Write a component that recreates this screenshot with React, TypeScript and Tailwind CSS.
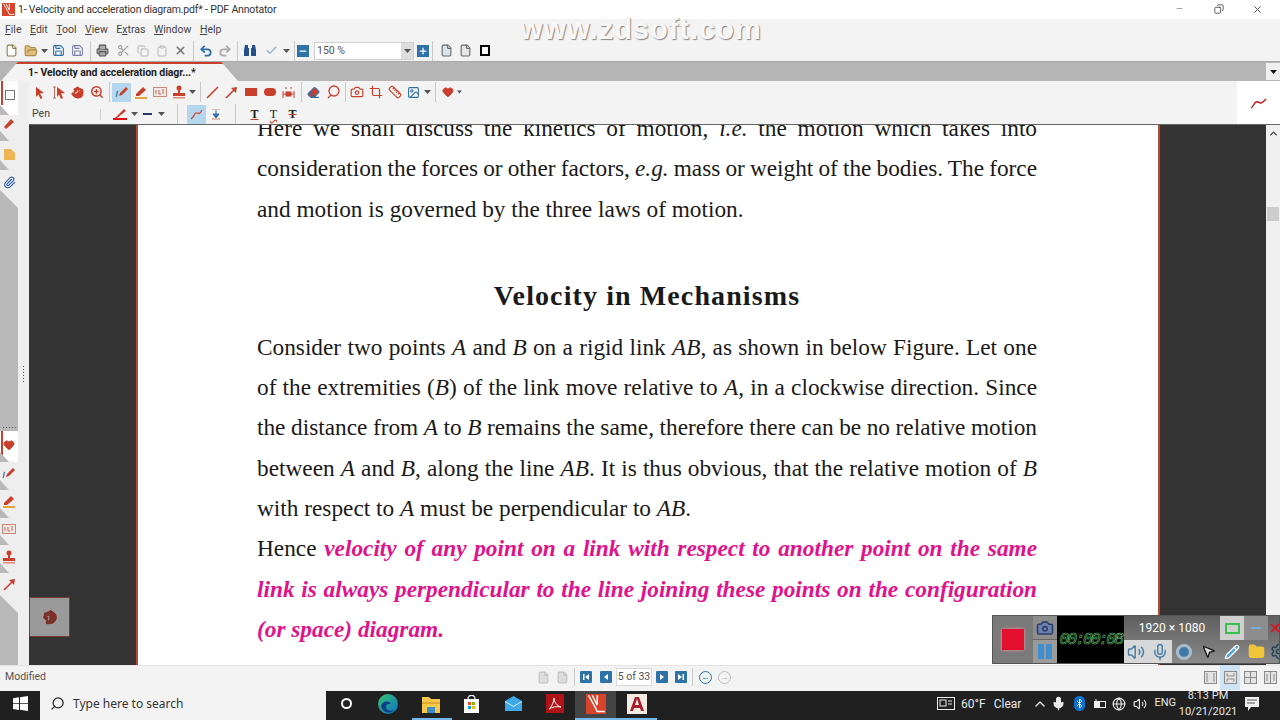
import { ReactNode } from 'react';
import {
  Search, Mic, Volume2, ChevronUp, Bluetooth, Globe, Settings, Folder, MousePointer2, Pencil, Minus,
  X, Copy, Save, Printer, Scissors, Clipboard, Undo2, Redo2, ZoomIn, Hand, Camera, Crop, Ruler, Paperclip,
  Heart, Eraser, File, FolderOpen, Image, Plus, Check,
} from 'lucide-react';

const RED = '#c8402c';
const BLUE = '#2b6ea8';

function Caret({ dark }: { dark?: boolean }) {
  return (
    <svg width="7" height="4" viewBox="0 0 7 4">
      <path d="M0 0h7L3.5 4z" fill={dark ? '#111' : '#555'} />
    </svg>
  );
}

function Sep() {
  return <div className="mx-[2.5px] h-[20px] w-px shrink-0 bg-[#c9c9c9]" />;
}

function Cell({ children, active }: { children: ReactNode; active?: boolean }) {
  return (
    <div className={`flex h-[19px] w-[19px] shrink-0 items-center justify-center ${active ? 'bg-[#b5d7ee]' : ''}`}>
      {children}
    </div>
  );
}

function Arrow() {
  return (
    <svg width="12" height="13" viewBox="0 0 12 13">
      <path d="M2 1l8 6-4 .5 2.5 4.5-2 1-2-4.5L2 11z" fill={RED} />
    </svg>
  );
}

function ArrowBeam() {
  return (
    <svg width="14" height="13" viewBox="0 0 14 13" fill="none">
      <path d="M1 1h3M1 12h3M2.500 1v11" stroke="#b5705f" />
      <path d="M5 1l8 6-4 .5 2 4.500-2 1-2-4.500-2 2.500z" fill={RED} />
    </svg>
  );
}

function PenLine() {
  return (
    <svg width="14" height="14" viewBox="0 0 14 14" fill="none">
      <path d="M1 12c2-3 0-5 2-6" stroke="#2b6ea8" strokeWidth="1.2" />
      <path d="M4 11l1-3 6-6 2 2-6 6z" fill={RED} />
    </svg>
  );
}

function Marker() {
  return (
    <svg width="14" height="14" viewBox="0 0 14 14">
      <path d="M2 9l7-7 3 3-7 6H2z" fill={RED} />
      <rect x="1" y="12" width="12" height="2" fill="#e8a33a" />
    </svg>
  );
}

function TextBox() {
  return (
    <svg width="14" height="12" viewBox="0 0 14 12" fill="none">
      <rect x=".5" y="1.5" width="13" height="9" fill="#f3e6e2" stroke="#c8897a" />
      <path d="M3 4v4M6 4v4h2M10 3v5" stroke="#b5705f" />
    </svg>
  );
}

function Stamp() {
  return (
    <svg width="14" height="14" viewBox="0 0 14 14">
      <circle cx="7" cy="3" r="2.5" fill={RED} />
      <rect x="6" y="4" width="2" height="4" fill={RED} />
      <rect x="1" y="8" width="12" height="3" fill={RED} />
      <rect x="1" y="12" width="12" height="1.5" fill="#e58a78" />
    </svg>
  );
}

function RedArrow() {
  return (
    <svg width="13" height="13" viewBox="0 0 13 13" fill="none">
      <path d="M1 12L9 4" stroke={RED} strokeWidth="1.6" />
      <path d="M6 2l6-1-1 6z" fill={RED} />
    </svg>
  );
}

function Binoculars() {
  return (
    <svg width="14" height="13" viewBox="0 0 14 13">
      <path d="M2 1h3v3h1v8H1V6zM9 1h3l1 5v6H8V4h1z" fill="#274f8a" />
    </svg>
  );
}

function AnnotatorLogo({ size }: { size: number }) {
  return (
    <svg width={size} height={size} viewBox="0 0 16 16" fill="none">
      <rect width="16" height="16" fill="#d8432c" />
      <path d="M2 1l5 9 2 4h6M5 1l4 8M9 1v7" stroke="#fff" strokeWidth="1.2" />
    </svg>
  );
}

function NavBtn({ d }: { d: string }) {
  return (
    <div className="flex h-[12px] w-[12px] items-center justify-center rounded-[1px] bg-[#2f72a8]">
      <svg width="8" height="8" viewBox="0 0 8 8">
        <path d={d} fill="#fff" />
      </svg>
    </div>
  );
}

function ViewBtn({ d, active }: { d: string; active?: boolean }) {
  return (
    <div className={`flex h-[25px] w-[20px] items-center justify-center ${active ? 'bg-[#cde4f5]' : ''}`}>
      <svg width="13" height="13" viewBox="0 0 13 13" fill="#e4e4e4" stroke="#8a8a8a">
        <rect x=".5" y=".5" width="12" height="12" />
        <path d={d} fill="none" />
      </svg>
    </div>
  );
}

function SideTab({ children, className, white, last }: { children: ReactNode; className: string; white?: boolean; last?: boolean }) {
  return (
    <div className={`relative flex w-[18px] items-center justify-center ${className} ${white ? 'bg-white' : 'bg-[#eeeeee]'}`}>
      {white && <div className="absolute top-0 left-[1px] h-[24px] w-[1.5px] bg-[#c8402c]" />}
      <div className="relative z-10">{children}</div>
      {!last && (
        <div className="absolute bottom-0 left-0 h-[10px] w-[9px] bg-[#b9b9b9] [clip-path:polygon(0_0,100%_100%,0_100%)]" />
      )}
    </div>
  );
}

function SideEnd() {
  return <div className="h-[18px] w-[18px] shrink-0 bg-[#eeeeee] [clip-path:polygon(0_0,100%_100%,100%_0)]" />;
}

function Sidebar() {
  return (
    <div className="flex w-[29px] shrink-0 bg-[#eeeeee]">
      <div className="flex w-[18px] flex-col bg-[#b9b9b9]">
        <SideTab white className="h-[34px] pb-[6px] pl-[1px]">
          <div className="h-[10px] w-[10px] border border-[#777] bg-white" />
        </SideTab>
        <SideTab className="h-[26px] pb-[8px]">
          <svg width="13" height="13" viewBox="0 0 13 13">
            <path d="M1 9l7-8 3 3-8 7z" fill={RED} />
          </svg>
        </SideTab>
        <SideTab className="h-[29px] pb-[3px]">
          <svg width="11" height="11" viewBox="0 0 11 11">
            <path d="M0 0h7l4 4v7H0z" fill="#efb454" />
          </svg>
        </SideTab>
        <SideTab last className="h-[20px] pt-[5px]">
          <Paperclip size={13} color="#2f5fa8" />
        </SideTab>
        <SideEnd />
        <div className="flex h-[223px] items-end justify-center gap-[2px] pb-[3px]">
          {[0, 1, 2, 3, 4].map((i) => (
            <div key={i} className="h-px w-px bg-[#555]" />
          ))}
        </div>
        <SideTab white className="h-[31px] pb-[3px]">
          <Heart size={12} fill={RED} color={RED} />
        </SideTab>
        <SideTab className="h-[28px] pb-[6px]">
          <PenLine />
        </SideTab>
        <SideTab className="h-[28px] pb-[6px]">
          <Marker />
        </SideTab>
        <SideTab className="h-[27px] pb-[5px]">
          <TextBox />
        </SideTab>
        <SideTab className="h-[28px] pb-[4px]">
          <Stamp />
        </SideTab>
        <SideTab last className="h-[22px]">
          <RedArrow />
        </SideTab>
        <SideEnd />
      </div>
      <div className="flex w-[11px] flex-col items-center pt-[285px]">
        <div className="flex flex-col gap-[2px]">
          {[0, 1, 2, 3, 4, 5].map((i) => (
            <div key={i} className="h-px w-px bg-[#555]" />
          ))}
        </div>
      </div>
    </div>
  );
}

function TextLine({ children, full = true }: { children: ReactNode; full?: boolean }) {
  return (
    <div className={`h-[40.3px] leading-[40.3px] whitespace-nowrap ${full ? 'text-justify [text-align-last:justify] [word-spacing:-1px]' : ''}`}>
      {children}
    </div>
  );
}

function Page() {
  return (
    <div className="-mt-[17px] w-[1024px] shrink-0 border-x-[2.5px] border-[#b9472f] bg-white pr-[121px] pb-[40px] pl-[119px] font-['Liberation_Serif',serif] text-[23.3px] text-[#1a1a1a]">
      <TextLine>Here we shall discuss the kinetics of motion, <i>i.e.</i> the motion which takes into</TextLine>
      <TextLine>consideration the forces or other factors, <i>e.g.</i> mass or weight of the bodies. The force</TextLine>
      <TextLine full={false}>and motion is governed by the three laws of motion.</TextLine>
      <h2 className="mt-[47px] mb-[11px] h-[40px] text-center text-[28px] leading-[40px] font-bold tracking-[1.1px]">Velocity in Mechanisms</h2>
      <TextLine>Consider two points <i>A</i> and <i>B</i> on a rigid link <i>AB</i>, as shown in below Figure. Let one</TextLine>
      <TextLine>of the extremities (<i>B</i>) of the link move relative to <i>A</i>, in a clockwise direction. Since</TextLine>
      <TextLine>the distance from <i>A</i> to <i>B</i> remains the same, therefore there can be no relative motion</TextLine>
      <TextLine>between <i>A</i> and <i>B</i>, along the line <i>AB</i>. It is thus obvious, that the relative motion of <i>B</i></TextLine>
      <TextLine full={false}>with respect to <i>A</i> must be perpendicular to <i>AB</i>.</TextLine>
      <TextLine>Hence <b className="text-[#e0128c] italic">velocity of any point on a link with respect to another point on the same</b></TextLine>
      <TextLine><b className="text-[#e0128c] italic">link is always perpendicular to the line joining these points on the configuration</b></TextLine>
      <TextLine full={false}><b className="text-[#e0128c] italic">(or space) diagram.</b></TextLine>
    </div>
  );
}

function Recorder() {
  return (
    <div className="absolute right-0 bottom-[1px] flex h-[49px] w-[288px] border border-[#555] bg-gradient-to-b from-[#5f5f5f] to-[#8a8a8a]">
      <div className="flex w-[40px] shrink-0 items-center justify-center bg-[#7a7a7a]">
        <div className="h-[21px] w-[22px] bg-[#e2102e] shadow-[0_0_3px_#ff9aa0]" />
      </div>
      <div className="flex w-[24px] shrink-0 flex-col">
        <div className="flex flex-1 items-center justify-center bg-[#8d8d8d]">
          <Camera size={18} color="#2a3b66" fill="#6f7fb0" />
        </div>
        <div className="flex flex-1 items-center justify-center gap-[2px] border-t border-[#666] bg-[#9a9a9a]">
          <div className="h-[15px] w-[6px] bg-[#3f8fd0]" />
          <div className="h-[15px] w-[6px] bg-[#3f8fd0]" />
        </div>
      </div>
      <div className="flex w-[67px] shrink-0 items-center justify-center bg-black font-['Liberation_Mono',monospace] text-[17px] tracking-[-2.4px] text-black italic [-webkit-text-stroke:0.6px_#62c46e]">
        00:00:08
      </div>
      <div className="flex min-w-0 flex-1 flex-col overflow-hidden">
        <div className="flex h-[24px]">
          <div className="flex w-[96px] shrink-0 items-center justify-center font-['Roboto',sans-serif] text-[12px] text-white">1920 × 1080</div>
          <div className="flex w-[24px] shrink-0 items-center justify-center bg-[#cfcfcf]">
            <div className="h-[11px] w-[15px] border-2 border-[#37c24f]" />
          </div>
          <div className="flex w-[24px] shrink-0 items-center justify-center bg-[#8d8d8d]">
            <Minus size={14} color="#6fb2e8" strokeWidth={3} />
          </div>
          <div className="flex flex-1 items-center justify-center">
            <X size={14} color="#e01020" strokeWidth={3} />
          </div>
        </div>
        <div className="flex flex-1">
          <div className="flex w-[24px] shrink-0 items-center justify-center bg-[#d8d8d8]">
            <Volume2 size={18} color="#4a7fa8" />
          </div>
          <div className="flex w-[24px] shrink-0 items-center justify-center bg-[#d8d8d8]">
            <Mic size={18} color="#4a7fa8" />
          </div>
          <div className="flex w-[24px] shrink-0 items-center justify-center">
            <div className="h-[16px] w-[16px] rounded-full border-[3px] border-[#a9bccb] bg-[#3f78a5]" />
          </div>
          <div className="flex w-[24px] shrink-0 items-center justify-center">
            <MousePointer2 size={15} color="#111" fill="#ddd" />
          </div>
          <div className="flex w-[24px] shrink-0 items-center justify-center">
            <Pencil size={16} color="#fff" fill="#4aa3e0" />
          </div>
          <div className="flex w-[24px] shrink-0 items-center justify-center">
            <Folder size={17} color="#f0c53a" fill="#f0c53a" />
          </div>
          <div className="flex flex-1 items-center overflow-hidden pl-[2px]">
            <Settings size={17} color="#23435c" className="shrink-0" />
          </div>
        </div>
      </div>
    </div>
  );
}

function Taskbar() {
  return (
    <div className="flex h-[29px] shrink-0 bg-[#202020] font-['Roboto',sans-serif] text-white">
      <div className="flex w-[40px] items-center justify-center pb-[4px]">
        <svg width="15" height="15" viewBox="0 0 15 15">
          <path d="M0 2.2l6-.9v5.9H0zM7 1.2L15 0v7.2H7zM0 8h6v5.9l-6-.9zM7 8h8v7l-8-1.2z" fill="#fff" />
        </svg>
      </div>
      <div className="flex h-full w-[286px] items-center bg-[#f3f3f3] pb-[4px] pl-[10px] font-['Noto_Sans',sans-serif] text-[12px] text-[#333]">
        <Search size={15} color="#222" className="-scale-x-100" />
        <span className="ml-[8px]">Type here to search</span>
      </div>
      <div className="flex h-full w-[249px] items-center pb-[4px]">
        <div className="ml-[15px] h-[11px] w-[11px] rounded-full border-2 border-white" />
        <svg className="ml-[26px]" width="20" height="20" viewBox="0 0 20 20">
          <defs>
            <linearGradient id="edgeFill" x1="0" y1="0" x2="1" y2="1">
              <stop offset="0" stopColor="#37c46f" />
              <stop offset="1" stopColor="#0d6fc7" />
            </linearGradient>
          </defs>
          <circle cx="10" cy="10" r="10" fill="url(#edgeFill)" />
          <path d="M3 12c1-5 8-6 10-2-2-1-5 0-5 3s4 5 8 3c-5 5-12 2-13-4z" fill="#0b3f8a" />
        </svg>
        <div className="relative ml-[24px] h-full w-[20px]">
          <svg className="mt-[5px]" width="18" height="17" viewBox="0 0 18 17">
            <path d="M0 1h7l2 2h9v14H0z" fill="#f5c84b" />
            <path d="M0 6h18v2H0z" fill="#e0a92e" />
            <rect x="5" y="11" width="8" height="6" fill="#3a8fc9" />
          </svg>
          <div className="absolute -bottom-[4px] -left-[10px] h-[2px] w-[40px] bg-[#76b9ed]" />
        </div>
        <svg className="ml-[22px]" width="15" height="18" viewBox="0 0 15 18" fill="none">
          <path d="M0 4h15v14H0z" fill="#fff" />
          <path d="M4 4c0-5 7-5 7 0" stroke="#eee" strokeWidth="1.300" />
          <rect x="4" y="7" width="3" height="3" fill="#f25022" />
          <rect x="8" y="7" width="3" height="3" fill="#7fba00" />
          <rect x="4" y="11" width="3" height="3" fill="#00a4ef" />
          <rect x="8" y="11" width="3" height="3" fill="#ffb900" />
        </svg>
        <svg className="ml-[26px]" width="17" height="15" viewBox="0 0 17 15">
          <path d="M0 5l8.500-5L17 5v10H0z" fill="#3ea8e8" />
          <path d="M0 5l8.500 5L17 5v1l-8.500 5L0 6z" fill="#d9f0fb" />
        </svg>
        <svg className="ml-[24px]" width="18" height="19" viewBox="0 0 18 19" fill="none">
          <rect width="18" height="19" fill="#b01218" />
          <path d="M3 15c3-2 5-8 5-11 0 4 3 8 7 9-4-1-9 0-12 2z" stroke="#fff" strokeWidth="1" />
        </svg>
      </div>
      <div className="relative flex h-full w-[41px] items-center justify-center bg-[#444] pb-[4px]">
        <AnnotatorLogo size={20} />
        <div className="absolute right-0 bottom-0 left-0 h-[2px] bg-[#76b9ed]" />
      </div>
      <div className="relative flex h-full w-[41px] items-center justify-center pb-[4px]">
        <svg width="20" height="20" viewBox="0 0 20 20">
          <rect width="20" height="20" fill="#f2ece4" />
          <path d="M8 3h4l5 14h-3l-1-3H7l-1 3H3zM8 11h4l-2-6z" fill="#a51f2d" fillRule="evenodd" />
        </svg>
        <div className="absolute right-0 bottom-0 left-0 h-[2px] bg-[#76b9ed]" />
      </div>
      <div className="flex flex-1 items-center justify-end pb-[4px] text-[12px] text-[#e8e8e8]">
        <svg width="18" height="13" viewBox="0 0 18 13" fill="none" stroke="#eee">
          <rect x=".5" y=".5" width="17" height="12" />
          <rect x="3" y="3" width="6" height="6" />
          <path d="M11 4h4M11 7h4" />
        </svg>
        <span className="ml-[6px]">60°F</span>
        <span className="ml-[8px]">Clear</span>
        <ChevronUp size={16} className="ml-[11px]" />
        <Mic size={15} className="ml-[3px]" fill="#eee" />
        <div className="ml-[8px] flex h-[15px] w-[11px] items-center justify-center rounded-[5px] bg-[#0a6ed1]">
          <Bluetooth size={11} color="#fff" />
        </div>
        <svg className="ml-[8px]" width="14" height="10" viewBox="0 0 14 10" fill="none" stroke="#eee">
          <rect x="1.5" y="2.5" width="11" height="6" />
          <rect x="2.5" y="3.5" width="4" height="4" fill="#eee" />
          <path d="M3 0v2" />
        </svg>
        <Globe size={14} className="ml-[5px]" />
        <Volume2 size={14} className="ml-[7px]" />
        <span className="ml-[7px] text-[11px]">ENG</span>
        <div className="ml-[3px] flex w-[58px] flex-col items-center text-[11px] leading-[16px]">
          <span>8:13 PM</span>
          <span>10/21/2021</span>
        </div>
        <svg className="mr-[21px] ml-[8px]" width="14" height="14" viewBox="0 0 14 14" fill="none">
          <path d="M0 0h14v10H6l-3 4v-4H0z" fill="#eee" />
          <path d="M2 3h10M2 6h8" stroke="#555" />
        </svg>
      </div>
    </div>
  );
}

export default function App() {
  return (
    <div className="flex h-[720px] w-[1280px] flex-col overflow-hidden bg-[#f3f3f3] font-['Roboto',sans-serif] text-[11px] text-[#333]">
      {/* title bar */}
      <div className="flex h-[19px] shrink-0 items-center bg-white pl-[2px] text-[#333]">
        <AnnotatorLogo size={13} />
        <span className="ml-[3px] text-[10.5px] tracking-[-0.18px]">1- Velocity and acceleration diagram.pdf* - PDF Annotator</span>
        <div className="flex flex-1 justify-end pr-[17px]">
          <Minus size={9} color="#888" />
          <Copy size={10} color="#444" className="ml-[30px] -scale-x-100" />
          <X size={11} color="#444" className="ml-[28px]" />
        </div>
      </div>

      {/* menu */}
      <div className="relative flex h-[21px] shrink-0 items-center gap-[8.5px] pl-[5px] text-[10.5px] text-[#444]">
        <span><u>F</u>ile</span>
        <span><u>E</u>dit</span>
        <span><u>T</u>ool</span>
        <span><u>V</u>iew</span>
        <span>E<u>x</u>tras</span>
        <span><u>W</u>indow</span>
        <span><u>H</u>elp</span>
        <span className="absolute top-[-4px] left-[520px] font-['Liberation_Sans',sans-serif] text-[29px] leading-[29px] font-bold tracking-[1px] text-[#f7f7f7] [text-shadow:1px_1px_1px_#888]">www.zdsoft.com</span>
      </div>

      {/* toolbar 1 */}
      <div className="flex h-[21px] shrink-0 items-center pl-[2px]">
        <Cell><File size={13} color="#8a7a50" fill="#fff" /></Cell>
        <Cell><FolderOpen size={14} color="#a88a4a" fill="#e0bd78" /></Cell>
        <div className="flex w-[8px] justify-center"><Caret /></div>
        <div className="ml-[1px]"><Cell><Save size={13} color="#2b6ea8" /></Cell></div>
        <Cell><Save size={13} color="#7a7fa8" /></Cell>
        <Sep />
        <Cell><Printer size={13} color="#555" fill="#aaa" /></Cell>
        <div className="ml-[2px]"><Cell><Scissors size={13} color="#9a9a9a" /></Cell></div>
        <Cell><Copy size={12} color="#b5b5b5" /></Cell>
        <Cell><Clipboard size={12} color="#b5b5b5" /></Cell>
        <Cell><X size={13} color="#777" strokeWidth={3} /></Cell>
        <Sep />
        <Cell><Undo2 size={14} color={BLUE} strokeWidth={3} /></Cell>
        <Cell><Redo2 size={14} color="#aaa" strokeWidth={3} /></Cell>
        <Sep />
        <Cell><Binoculars /></Cell>
        <div className="ml-[3px]"><Cell><Check size={13} color="#9fb5c8" strokeWidth={3} /></Cell></div>
        <div className="flex w-[10px] justify-center"><Caret /></div>
        <Sep />
        <div className="flex h-[12px] w-[12px] items-center justify-center bg-[#2f72a8]">
          <Minus size={10} color="#fff" strokeWidth={3} />
        </div>
        <div className="mr-[3px] ml-[5px] flex h-[18px] w-[100px] items-center justify-between border border-[#d0d0d0] bg-white pl-[2px] text-[10.5px] text-[#555]">
          <span>150 %</span>
          <div className="flex h-full w-[12px] items-center justify-center bg-[#ddd]"><Caret /></div>
        </div>
        <div className="flex h-[12px] w-[12px] items-center justify-center bg-[#2f72a8]">
          <Plus size={10} color="#fff" strokeWidth={3} />
        </div>
        <Sep />
        <div className="ml-[2px]"><Cell><File size={13} color="#666" fill="#d8e4ee" /></Cell></div>
        <Cell><File size={13} color="#666" fill="#e6e6e6" /></Cell>
        <Cell><div className="h-[11px] w-[10px] border-2 border-black bg-white" /></Cell>
      </div>

      {/* tab strip */}
      <div className="relative flex h-[20px] shrink-0 border-t border-[#aaa] bg-[#b5b5b5]">
        <div className="ml-[1px] flex h-full w-[237px] items-center border-t-2 border-[#c8402c] bg-[#f3f3f3] pt-[1px] pl-[27px] text-[10.5px] font-bold tracking-[-0.1px] text-[#222] [clip-path:polygon(7%_0,93%_0,100%_100%,0_100%)]">
          1- Velocity and acceleration diagr...*
        </div>
        <div className="absolute top-[1px] right-0 flex h-[17px] w-[14px] items-center justify-center bg-[#f0f0f0]">
          <Caret dark />
        </div>
      </div>

      <div className="flex min-h-0 flex-1">
        <Sidebar />
        <div className="relative flex min-w-0 flex-1 flex-col">
          {/* annotation toolbars */}
          <div className="flex h-[44px] shrink-0 border-b border-[#666]">
            <div className="flex min-w-0 flex-1 flex-col">
              <div className="flex h-[22px] items-center">
                <div className="ml-[1px]"><Cell><Arrow /></Cell></div>
                <Cell><ArrowBeam /></Cell>
                <Cell><Hand size={13} color={RED} fill={RED} /></Cell>
                <Cell><ZoomIn size={14} color={RED} strokeWidth={2.5} /></Cell>
                <Sep />
                <Cell active><PenLine /></Cell>
                <Cell><Marker /></Cell>
                <Cell><TextBox /></Cell>
                <Cell><Stamp /></Cell>
                <div className="flex w-[9px] justify-center"><Caret /></div>
                <Sep />
                <Cell>
                  <svg width="13" height="13" viewBox="0 0 13 13"><path d="M1 12L12 1" stroke={RED} strokeWidth="1.6" /></svg>
                </Cell>
                <Cell><RedArrow /></Cell>
                <Cell><div className="h-[8px] w-[12px] bg-[#c8402c]" /></Cell>
                <Cell><div className="h-[8px] w-[12px] rounded-full bg-[#c8402c]" /></Cell>
                <Cell>
                  <svg width="13" height="13" viewBox="0 0 13 13" fill="none" stroke={RED}><path d="M1 5v7M12 5v7M1 8h11M4 1v2M9 1v2" /><rect x="4" y="6" width="5" height="4" fill={RED} /></svg>
                </Cell>
                <Sep />
                <Cell><Eraser size={13} color={BLUE} fill={RED} /></Cell>
                <Cell>
                  <svg width="14" height="14" viewBox="0 0 14 14" fill="none" stroke={RED} strokeWidth="1.3"><ellipse cx="8" cy="6" rx="5" ry="5" /><path d="M5 10l-3 3" /></svg>
                </Cell>
                <div className="-mr-[1px]"><Sep /></div>
                <Cell><Camera size={14} color={RED} /></Cell>
                <Cell><Crop size={14} color={RED} /></Cell>
                <Cell><Ruler size={14} color={RED} /></Cell>
                <Cell><Image size={13} color="#2b6ea8" /></Cell>
                <div className="flex w-[9px] justify-center"><Caret /></div>
                <Sep />
                <Cell><Heart size={12} fill={RED} color={RED} /></Cell>
                <div className="flex w-[5px] justify-center"><Caret /></div>
              </div>
              <div className="flex h-[21px] items-center pt-[1px]">
                <span className="w-[71px] pl-[3px] text-[10.5px] text-[#444]">Pen</span>
                <div className="h-[11px] w-px bg-[#d0d0d0]" />
                <div className="ml-[12px] flex w-[14px] flex-col items-center">
                  <svg width="13" height="9" viewBox="0 0 13 9"><path d="M1 9l9-9 2 2-9 7z" fill={RED} /></svg>
                  <div className="h-[2px] w-[14px] bg-[#e01010]" />
                </div>
                <div className="ml-[3px] flex w-[9px] justify-center"><Caret /></div>
                <div className="ml-[4px] h-[2px] w-[9px] bg-[#2a3a66]" />
                <div className="ml-[5px] flex w-[8px] justify-center"><Caret /></div>
                <div className="ml-[9px]"><Sep /></div>
                <div className="ml-[7px]"><Cell active>
                  <svg width="13" height="11" viewBox="0 0 13 11" fill="none"><path d="M1 10c3-1 3-7 6-6s3 0 5-3" stroke="#c8402c" strokeWidth="1.2" /></svg>
                </Cell></div>
                <Cell>
                  <svg width="12" height="11" viewBox="0 0 12 11"><path d="M2 0h8M2 10h8" stroke="#c8897a" /><path d="M6 1v4M3 5h6L6 9z" fill="#2b6ea8" stroke="#2b6ea8" /></svg>
                </Cell>
                <div className="ml-[7px]"><Sep /></div>
                <div className="ml-[10px] flex w-[13px] justify-center font-['Liberation_Serif',serif] text-[12px] font-bold text-[#222] underline decoration-[#c8402c]">T</div>
                <div className="ml-[6px] flex w-[13px] justify-center font-['Liberation_Serif',serif] text-[12px] text-[#222] underline decoration-wavy decoration-[#c8402c]">T</div>
                <div className="ml-[6px] flex w-[13px] justify-center font-['Liberation_Serif',serif] text-[12px] font-bold text-[#222] line-through decoration-[#c8402c]">T</div>
              </div>
            </div>
            <div className="flex w-[43px] items-center justify-center bg-white">
              <svg width="17" height="12" viewBox="0 0 17 12" fill="none"><path d="M1 11c3-1 3-8 7-6s4 1 8-3" stroke="#c8151b" strokeWidth="1.4" /></svg>
            </div>
          </div>

          {/* main */}
          <div className="flex min-h-0 flex-1">
            <div className="min-w-0 flex-1 overflow-hidden bg-[#333333] pl-[107px]">
              <Page />
            </div>
            <div className="flex w-[14px] shrink-0 flex-col items-center bg-[#f0f0f0] pt-[3px]">
              <ChevronUp size={11} color="#444" strokeWidth={3} />
              <div className="mt-[68px] h-[14px] w-[12px] bg-[#cdcdcd]" />
            </div>
          </div>
          <div className="absolute bottom-[28px] left-0 flex h-[40px] w-[41px] items-center justify-center border border-[#7a3a30] bg-[#9a9a9a]">
            <Hand size={15} color="#7d2f25" fill="#7d2f25" className="rotate-[-50deg]" />
          </div>
          <Recorder />
        </div>
      </div>

      {/* status bar */}
      <div className="flex h-[26px] shrink-0 items-center border-t border-[#e4e4e4] pb-[3px] text-[10.5px] text-[#555]">
        <span className="w-[537px] pl-[5px]">Modified</span>
        <File size={13} color="#c2c2c2" fill="#ddd" />
        <File size={13} color="#c2c2c2" fill="#ddd" className="ml-[6px]" />
        <div className="mx-[5px] h-[18px] w-px bg-[#ccc]" />
        <NavBtn d="M1 1h1.500v6H1zM7 1v6L3 4z" />
        <div className="ml-[8px]"><NavBtn d="M6 1v6L2 4z" /></div>
        <div className="mx-[4px] flex h-[18px] w-[36px] items-center justify-center border border-[#d8d8d8] bg-white">5 of 33</div>
        <NavBtn d="M2 1v6l4-3z" />
        <div className="ml-[7px]"><NavBtn d="M1 1v6l4-3zM5.500 1H7v6H5.500z" /></div>
        <div className="mx-[5px] h-[18px] w-px bg-[#ccc]" />
        <div className="ml-[1px] flex h-[13px] w-[13px] items-center justify-center rounded-full border border-[#2f72a8] text-[9px] leading-none text-[#2f72a8]">←</div>
        <div className="ml-[6px] flex h-[13px] w-[13px] items-center justify-center rounded-full border border-[#bdbdbd] text-[9px] leading-none text-[#bdbdbd]">→</div>
        <div className="flex flex-1 items-center justify-end">
          <ViewBtn d="M3 2v9M10 2v9" />
          <ViewBtn active d="M3 2v3h7V2M3 11V8h7v3" />
          <ViewBtn d="M1 6.500h11M6.500 1v11" />
          <ViewBtn d="M6.500 1v11M3 3v7M10 3v7" />
        </div>
      </div>

      <Taskbar />
    </div>
  );
}
